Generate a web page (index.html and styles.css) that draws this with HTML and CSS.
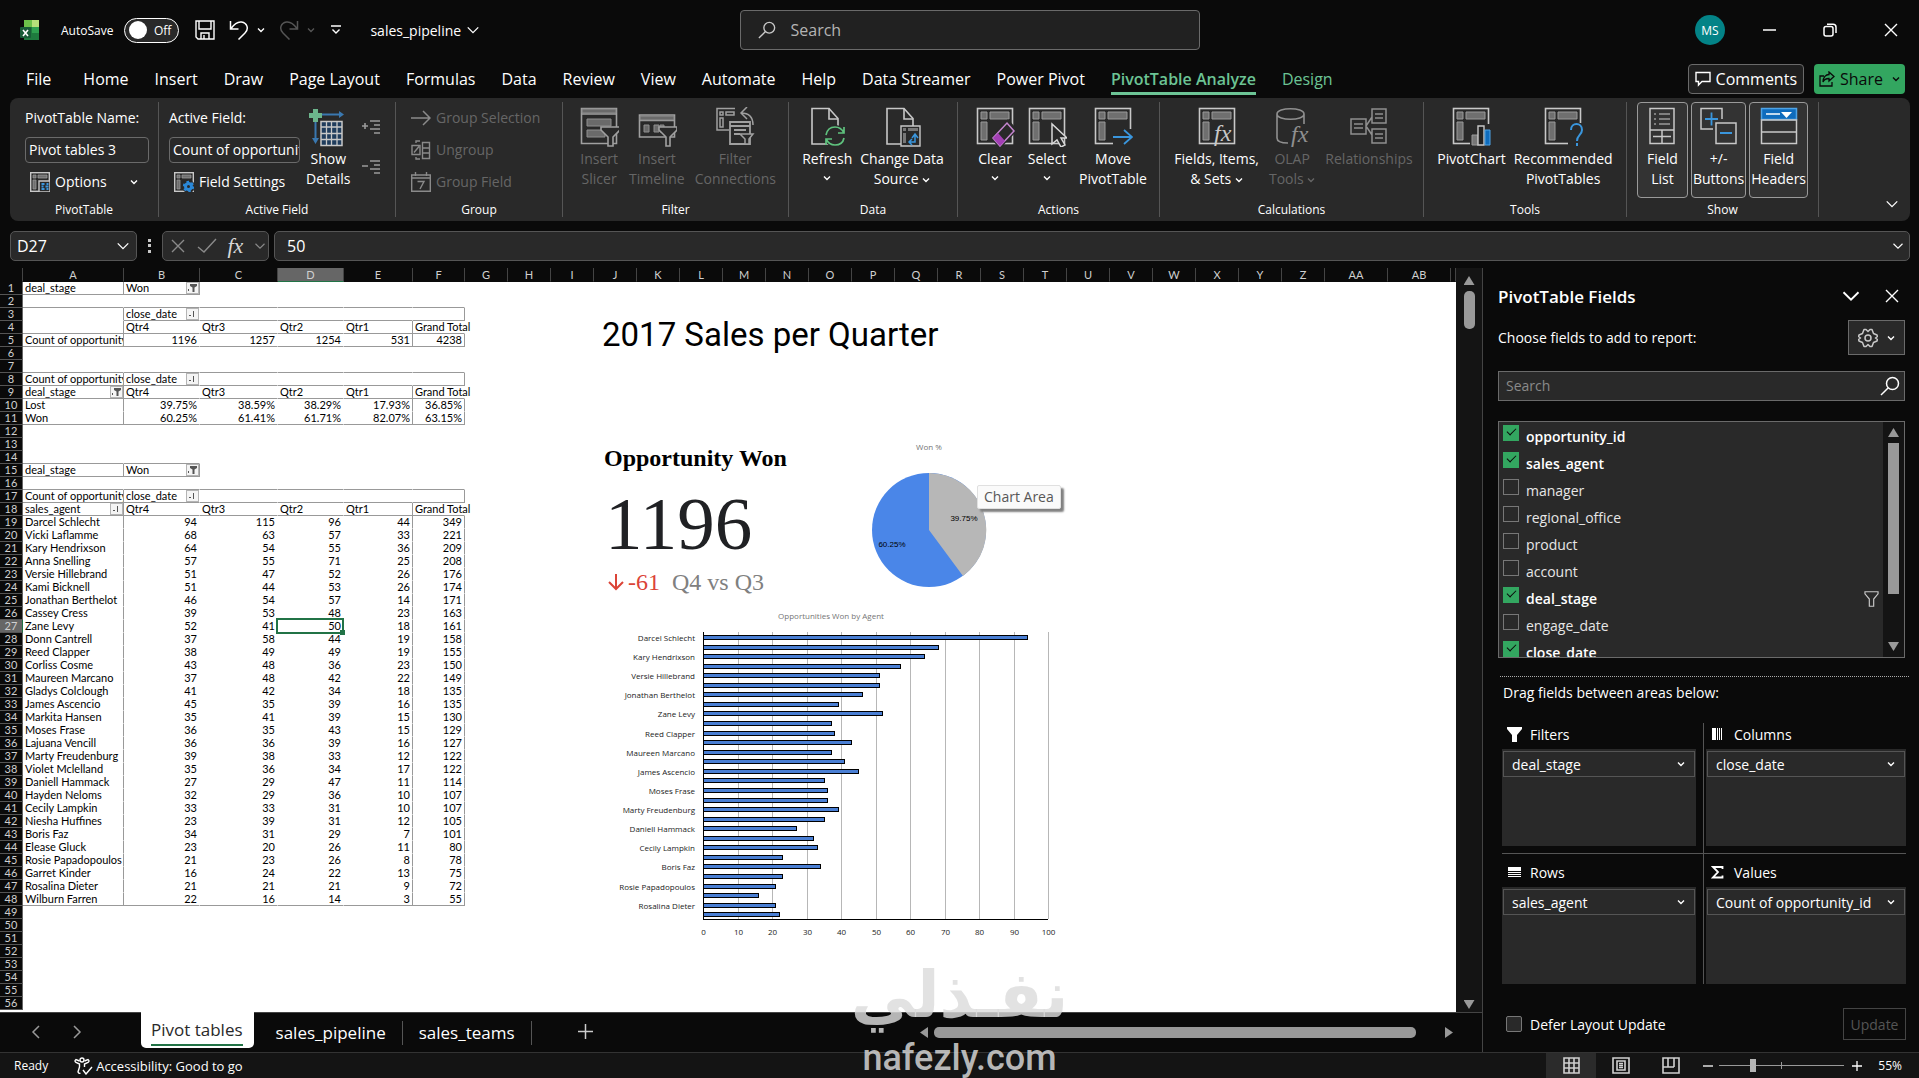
FILE: index.html
```
<!DOCTYPE html>
<html lang="en">
<head>
    <meta charset="UTF-8">
    <meta name="viewport" content="width=device-width, initial-scale=1.0">
    <title>sales_pipeline - Excel</title>
    <link rel="stylesheet" href="styles.css">
</head>
<body>
    <svg class="defs" aria-hidden="true">
        <symbol id="chev" viewBox="0 0 16 16"><path d="M2 5l6 6 6-6" fill="none" stroke="currentColor" stroke-width="1.5"/></symbol>
        <symbol id="chev-sm" viewBox="0 0 8 8"><path d="M1 2.5l3 3 3-3" fill="none" stroke="currentColor" stroke-width="1.4"/></symbol>
        <symbol id="close" viewBox="0 0 16 16"><path d="M2 2l12 12M14 2L2 14" fill="none" stroke="currentColor" stroke-width="1.4"/></symbol>
        <symbol id="glass" viewBox="0 0 20 20"><circle cx="12.5" cy="7.5" r="6" fill="none" stroke="currentColor" stroke-width="1.5"/><path d="M8.3 11.7L1 19" stroke="currentColor" stroke-width="1.5"/></symbol>
        <symbol id="pivot" viewBox="0 0 40 40">
            <rect x="2.5" y="1.5" width="35" height="35" fill="none" stroke="#c8c8c8" stroke-width="1.6"/>
            <path d="M6 5h6v7H6zM15 5h19v7H15zM6 15h6v18H6z" fill="#6f6f6f" stroke="#9a9a9a"/>
        </symbol>
        <symbol id="page" viewBox="0 0 40 40">
            <path d="M5 1.5h17l9 10V37H5z" fill="none" stroke="#c8c8c8" stroke-width="1.6"/>
            <path d="M22 1.5V12h9" fill="none" stroke="#c8c8c8" stroke-width="1.6"/>
        </symbol>
        <symbol id="funnel" viewBox="0 0 20 22"><path d="M1 1h18v3l-6 7v10H7V11L1 4z" fill="#292929" stroke="currentColor" stroke-width="1.6"/></symbol>
        <symbol id="pivot-sm" viewBox="0 0 20 20">
            <rect x=".7" y=".7" width="18.6" height="18.6" fill="none" stroke="#c8c8c8" stroke-width="1.4"/>
            <path d="M3 3h3v3H3zM8 3h9v3H8zM3 8h3v9H3z" fill="#6f6f6f" stroke="#9a9a9a" stroke-width=".8"/>
        </symbol>
    </svg>

    <header class="titlebar">
        <div class="quick">
            <svg class="logo" width="19" height="20" viewBox="0 0 19 20">
                <path d="M4 0h15v20H4z" fill="#1e7a3e"/><path d="M4 0h8v7H4z" fill="#6cc24a"/><path d="M12 0h7v7h-7z" fill="#b5e07a"/><path d="M12 7h7v6h-7z" fill="#2ea04f"/>
                <rect y="7" width="11" height="11" rx="1" fill="#185c37"/><path d="M3 10l5 6M8 10l-5 6" stroke="#fff" stroke-width="1.6"/>
            </svg>
            <label class="autosave">AutoSave <span class="toggle"><input type="checkbox">Off</span></label>
            <button class="icon-btn save" aria-label="Save"><svg width="20" height="20" viewBox="0 0 20 20" fill="none" stroke="currentColor" stroke-width="1.4"><path d="M1 1h18v18H3l-2-2zM4 1v8h12V1M6 19v-6h8v6M9 19v-4"/></svg></button>
            <button class="icon-btn" aria-label="Undo"><svg width="20" height="20" viewBox="0 0 20 20" fill="none" stroke="currentColor" stroke-width="1.5"><path d="M1.500 1v8h8M2 8.500C6 3 9 1.500 12.500 2c6 1 7.500 7 3.500 11L9.500 19.500"/></svg><svg width="8" height="8"><use href="#chev-sm"/></svg></button>
            <button class="icon-btn dim" aria-label="Redo"><svg width="20" height="20" viewBox="0 0 20 20" fill="none" stroke="currentColor" stroke-width="1.5"><path d="M18.500 1v8h-8M18 8.500C14 3 11 1.500 7.500 2c-6 1-7.500 7-3.500 11l6.500 6.500"/></svg><svg width="8" height="8"><use href="#chev-sm"/></svg></button>
            <button class="icon-btn custom" aria-label="Customize"><svg width="10" height="10" viewBox="0 0 10 10" fill="none" stroke="currentColor" stroke-width="1.400"><path d="M0 1h10M1.500 4.500L5 8l3.500-3.500"/></svg></button>
            <button class="icon-btn docname">sales_pipeline <svg width="14" height="14"><use href="#chev"/></svg></button>
        </div>
        <label class="search-top"><svg width="18" height="18"><use href="#glass"/></svg><input type="text" placeholder="Search" aria-label="Search"></label>
        <div class="window-btns">
            <button class="avatar">MS</button>
            <button aria-label="Minimize"><svg width="14" height="14" viewBox="0 0 14 14"><path d="M0 7h13" stroke="currentColor" stroke-width="1.500"/></svg></button>
            <button aria-label="Restore"><svg width="14" height="14" viewBox="0 0 14 14" fill="none" stroke="currentColor" stroke-width="1.500"><rect x="1" y="3.500" width="9" height="9.500" rx="2"/><path d="M4 1.200h6q3 0 3 3V10"/></svg></button>
            <button aria-label="Close"><svg width="16" height="16"><use href="#close"/></svg></button>
        </div>
    </header>

    <nav class="menu">
        <a href="#" class="file">File</a><a href="#">Home</a><a href="#">Insert</a><a href="#">Draw</a><a href="#">Page Layout</a><a href="#">Formulas</a><a href="#">Data</a><a href="#">Review</a><a href="#">View</a><a href="#">Automate</a><a href="#">Help</a><a href="#">Data Streamer</a><a href="#">Power Pivot</a><a href="#" class="active">PivotTable Analyze</a><a href="#" class="context">Design</a>
        <button class="comments"><svg width="16" height="16" viewBox="0 0 16 16" fill="none" stroke="currentColor" stroke-width="1.400"><path d="M1 1.500h14v9H7L3.500 14v-3.500H1z"/></svg>Comments</button>
        <button class="share"><svg width="16" height="16" viewBox="0 0 16 16" fill="none" stroke="currentColor" stroke-width="1.300"><path d="M5 5H1v10h12v-4M10 1l5 4.500-5 4.500V7.500c-3 0-5 1-6 3.500 0-5 3-7.500 6-7.500z"/></svg>Share<svg class="share-chev" width="8" height="8"><use href="#chev-sm"/></svg></button>
    </nav>

    <section class="ribbon">
        <div class="group g-pivot">
            <div class="stack">
                <label for="ptName">PivotTable Name:</label>
                <input id="ptName" type="text" value="Pivot tables 3">
                <button class="row-btn"><svg width="20" height="20"><use href="#pivot-sm"/><path d="M9 9h11v11H9z" fill="#292929" stroke="#c8c8c8" stroke-width="1.400"/><path d="M11.500 12h3M16.500 12h2M11.500 14.500h2M15.500 14.500h3M11.500 17h3M16.500 17h2" stroke="#3a96dd" stroke-width="2"/></svg>Options<svg class="push" width="8" height="8"><use href="#chev-sm"/></svg></button>
            </div>
            <h2>PivotTable</h2>
        </div>
        <div class="group g-field">
            <div class="items">
                <div class="stack">
                    <label for="activeField">Active Field:</label>
                    <input id="activeField" type="text" value="Count of opportunity_id">
                    <button class="row-btn"><svg width="20" height="20"><use href="#pivot-sm"/><circle cx="14.500" cy="14.500" r="6.500" fill="#292929"/><circle cx="14.500" cy="14.500" r="3" fill="none" stroke="#2b88d8" stroke-width="3"/><circle cx="14.500" cy="14.500" r="4.700" fill="none" stroke="#2b88d8" stroke-width="2" stroke-dasharray="2.500 2.400"/></svg>Field Settings</button>
                </div>
                <button class="big"><svg width="40" height="40" viewBox="0 0 40 40"><path d="M13 14.500h21v24H13z" fill="#1f3c5c" stroke="#c8c8c8" stroke-width="1.500"/><path d="M13 20h21M13 26.500h21M13 32.500h21M18.500 15v24M23.500 15v24M29 15v24" stroke="#c8c8c8" stroke-width="1.300"/><path d="M14 7.500h20M7.500 14v20" stroke="#3a78b0" stroke-width="2"/><path d="M31 4l5 3.500-5 3.500zM4 31l3.500 6 3.500-6z" fill="#3a78b0"/><path d="M5 2h5v4h4v5h-4v4H5v-4H1V6h4z" fill="#6cb58c"/></svg><span>Show<br>Details</span></button>
                <div class="expanders">
                    <button aria-label="Expand field"><svg width="18" height="14" viewBox="0 0 18 14" stroke="#9a9a9a" stroke-width="1.600"><path d="M0 6h6M3 3v6M8 1h10M12 5h6M8 9h10M12 13h6"/></svg></button>
                    <button aria-label="Collapse field"><svg width="18" height="14" viewBox="0 0 18 14" stroke="#9a9a9a" stroke-width="1.600"><path d="M0 6h6M8 1h10M12 5h6M8 9h10M12 13h6"/></svg></button>
                </div>
            </div>
            <h2>Active Field</h2>
        </div>
        <div class="group g-group">
            <div class="stack wide">
                <button class="row-btn dim" disabled><svg width="20" height="20" viewBox="0 0 20 20" fill="none" stroke="#8a8a8a" stroke-width="1.500"><path d="M0 10h18M12 3l7 7-7 7"/></svg>Group Selection</button>
                <button class="row-btn dim" disabled><svg width="20" height="20" viewBox="0 0 20 20" fill="none" stroke="#8a8a8a" stroke-width="1.400"><path d="M11.500 2.500h7v16h-7zM11.500 8h7M11.500 13h7M9 5.500H1v9h8zM3 12.500l5-6M5 3V1h4M5 17v2h4"/></svg>Ungroup</button>
                <button class="row-btn dim" disabled><svg width="20" height="20" viewBox="0 0 20 20" fill="none" stroke="#8a8a8a" stroke-width="1.400"><path d="M.700 3h18.600v16.300H.700zM1 6h18M4.500 0v4M15.500 0v4M6.500 9.500h6.500L9 17"/></svg>Group Field</button>
            </div>
            <h2>Group</h2>
        </div>
        <div class="group g-filter">
            <div class="items">
                <button class="big dim" disabled><svg width="40" height="40" viewBox="0 0 40 40"><path d="M2.500 1.500h35v35h-35zM2.500 7h35" fill="none" stroke="#a0a0a0" stroke-width="1.600"/><path d="M3 2h34v4H3zM8 12h24v7H8zM8 23h18v7H8z" fill="#6a6a6a" stroke="#8f8f8f"/><path d="M22 20h19v3l-7 7v9h-5v-9l-7-7z" fill="#292929" stroke="#a0a0a0" stroke-width="1.600"/></svg><span>Insert<br>Slicer</span></button>
                <button class="big dim" disabled><svg width="40" height="40" viewBox="0 0 40 40"><path d="M2.500 8h35v22h-35zM2.500 13.500h35" fill="none" stroke="#a0a0a0" stroke-width="1.600"/><path d="M3 9h34v4H3zM7 18h5v7H7zM17 18h5v7h-5zM23 18h4v7h-4z" fill="#6a6a6a" stroke="#8f8f8f"/><path d="M22 20h18v3l-7 7v9h-4v-9l-7-7z" fill="#292929" stroke="#a0a0a0" stroke-width="1.600"/></svg><span>Insert<br>Timeline</span></button>
                <button class="big dim" disabled><svg width="40" height="40" viewBox="0 0 40 40"><path d="M14 23H2V1.500h18M5 5h3v3H5zM11 5h8v3h-8zM5 11h3v9H5z" fill="none" stroke="#a0a0a0" stroke-width="1.500"/><path d="M32 0l-6 6 6 6M26 6c8 0 12 4 12 12" fill="none" stroke="#a0a0a0" stroke-width="1.500"/><path d="M15 15h20v22H15zM15 19h20M19 23h12M19 27h6" fill="#292929" stroke="#a0a0a0" stroke-width="1.800"/><path d="M25 27h13l-4 5v5h-4v-5z" fill="#292929" stroke="#a0a0a0" stroke-width="1.500"/></svg><span>Filter<br>Connections</span></button>
            </div>
            <h2>Filter</h2>
        </div>
        <div class="group g-data">
            <div class="items">
                <button class="big"><svg width="40" height="40"><use href="#page"/><circle cx="28" cy="29" r="11" fill="#292929"/><path d="M19 28c1-5 4-8 9-8 4 0 7 2 9 6M37 20v6h-6M37 31c-1 5-4 7-9 7-4 0-7-2-9-6M19 38v-6h6" fill="none" stroke="#5fc27e" stroke-width="1.700"/></svg><span>Refresh</span><svg width="8" height="8"><use href="#chev-sm"/></svg></button>
                <button class="big"><svg width="40" height="40"><use href="#page"/><path d="M19 19h19v20H19z" fill="#292929" stroke="#c8c8c8" stroke-width="1.400"/><path d="M21 21h3v3h-3zM26 21h10v3H26zM21 26h3v10h-3z" fill="#777"/><path d="M27 35h6v-7M30 31l3-4 3 4M30 32l-3 3 3 3" fill="none" stroke="#3a96dd" stroke-width="1.500"/></svg><span>Change Data<br>Source <svg width="8" height="8"><use href="#chev-sm"/></svg></span></button>
            </div>
            <h2>Data</h2>
        </div>
        <div class="group g-actions">
            <div class="items">
                <button class="big"><svg width="40" height="40"><use href="#pivot"/><path d="M18 31L33 15l7 8-15 16z" fill="#292929" stroke="#292929" stroke-width="4"/><path d="M18 31L32 16l7 8-14 15z" fill="none" stroke="#c586d0" stroke-width="1.500"/><path d="M18 31l5-5 7 8-5 5z" fill="#a33fb5"/></svg><span>Clear</span><svg width="8" height="8"><use href="#chev-sm"/></svg></button>
                <button class="big"><svg width="40" height="40"><use href="#pivot"/><path d="M25 17v20l5-4 4 7 4-2-4-7h6z" fill="#292929" stroke="#d8d8d8" stroke-width="1.500"/></svg><span>Select</span><svg width="8" height="8"><use href="#chev-sm"/></svg></button>
                <button class="big"><svg width="40" height="40"><use href="#pivot"/><path d="M20 22h20v16H20z" fill="#292929"/><path d="M20 30h18M31 23l8 7-8 7" fill="none" stroke="#3a96dd" stroke-width="1.800"/></svg><span>Move<br>PivotTable</span></button>
            </div>
            <h2>Actions</h2>
        </div>
        <div class="group g-calc">
            <div class="items">
                <button class="big"><svg width="40" height="40"><use href="#pivot"/><path d="M17 16h19v19H17z" fill="#292929"/><text x="17" y="34" class="fx-icon">fx</text></svg><span>Fields, Items,<br>&amp; Sets <svg width="8" height="8"><use href="#chev-sm"/></svg></span></button>
                <button class="big dim" disabled><svg width="40" height="40" viewBox="0 0 40 40"><path d="M16 36C8 36 5 34 5 31V7c0-7 27-7 27 0 0 7-27 7-27 0M32 7v10" fill="none" stroke="#8f8f8f" stroke-width="1.600"/><text x="19" y="35" class="fx-icon">fx</text></svg><span>OLAP<br>Tools <svg width="8" height="8"><use href="#chev-sm"/></svg></span></button>
                <button class="big dim" disabled><svg width="40" height="40" viewBox="0 0 40 40" fill="none" stroke="#8f8f8f" stroke-width="1.500"><path d="M2 12h15v15H2zM23 2h14v14H23zM23 22h14v14H23zM17 19l6-9M17 19l6 9M5 17h9M5 21h9M26 7h8M26 11h8M26 27h8M26 31h8"/></svg><span>Relationships</span></button>
            </div>
            <h2>Calculations</h2>
        </div>
        <div class="group g-tools">
            <div class="items">
                <button class="big"><svg width="40" height="40"><use href="#pivot"/><path d="M19 17h21v22H19z" fill="#292929"/><path d="M21 28h6v10h-6z" fill="#777" stroke="#9a9a9a"/><path d="M27 19h6v19h-6z" fill="#222" stroke="#c8c8c8" stroke-width="1.400"/><path d="M34 23h5v15h-5z" fill="#0f6cbd" stroke="#4ea3e6"/></svg><span>PivotChart</span></button>
                <button class="big"><svg width="40" height="40"><use href="#pivot"/><path d="M25 16h15v22H25z" fill="#292929"/><path d="M28 23c0-8 11-8 11 0 0 5-5 5-5 11M34 36v3" fill="none" stroke="#3a96dd" stroke-width="2"/></svg><span>Recommended<br>PivotTables</span></button>
            </div>
            <h2>Tools</h2>
        </div>
        <div class="group g-show">
            <div class="items">
                <button class="big on"><svg width="40" height="40" viewBox="0 0 40 40" fill="none" stroke="#c8c8c8" stroke-width="1.500"><path d="M8 1.500h24v35H8zM8 23h24M20 23v13M11 29.500h18"/><path d="M12 7h2M17 7h11M12 12h2M17 12h11M12 17h2M17 17h11" stroke="#9a9a9a"/></svg><span>Field<br>List</span></button>
                <button class="big on"><svg width="40" height="40" viewBox="0 0 40 40" fill="none" stroke="#c8c8c8" stroke-width="1.500"><path d="M14 22H2V1.500h21V12M17 16h20v20.500H17z"/><path d="M6 12h13M12.500 5.500v13M21 26h12" stroke="#3a96dd" stroke-width="1.800"/></svg><span>+/-<br>Buttons</span></button>
                <button class="big on"><svg width="40" height="40" viewBox="0 0 40 40" fill="none" stroke="#c8c8c8" stroke-width="1.500"><path d="M2.500 1.500h35v11h-35z" fill="#0f6cbd" stroke="#4ea3e6"/><path d="M2.500 13v23.500h35V13zM3 25h34"/><path d="M7 7h14" stroke="#fff"/><path d="M22 5h11l-5.500 6z" fill="#fff" stroke="none"/></svg><span>Field<br>Headers</span></button>
            </div>
            <h2>Show</h2>
        </div>
        <button class="collapse" aria-label="Collapse ribbon"><svg width="14" height="14"><use href="#chev"/></svg></button>
    </section>

    <div class="formula-row">
        <div class="box name-box"><input type="text" value="D27" aria-label="Name box"><svg width="14" height="14"><use href="#chev"/></svg></div>
        <span class="dots"></span>
        <div class="box fx-box">
            <button aria-label="Cancel"><svg width="16" height="16"><use href="#close"/></svg></button>
            <button aria-label="Enter"><svg width="20" height="16" viewBox="0 0 20 16"><path d="M1 9l6 5L19 1" fill="none" stroke="currentColor" stroke-width="1.400"/></svg></button>
            <button class="fx">fx</button>
            <svg width="12" height="12"><use href="#chev"/></svg>
        </div>
        <div class="box formula"><input type="text" value="50" aria-label="Formula"><svg width="12" height="12"><use href="#chev"/></svg></div>
    </div>

    <main class="workspace">
        <div class="book">
            <div class="sheet-row">
                <div class="sheet">
                    <table class="grid" id="grid"></table>
                    <h1 class="sheet-title">2017 Sales per Quarter</h1>
                    <div class="scorecard">
                        <h3>Opportunity Won</h3>
                        <p class="score">1196</p>
                        <p class="delta"><svg width="18" height="18" viewBox="0 0 18 18"><path d="M9 1v15M2 9l7 7 7-7" fill="none" stroke="currentColor" stroke-width="2"/></svg><b>-61</b> Q4 vs Q3</p>
                    </div>
                    <svg class="pie" width="150" height="160" viewBox="0 0 150 160">
                        <text x="75" y="10" class="chart-title">Won %</text>
                        <circle cx="75" cy="90" r="57" fill="#4a86e8"/>
                        <path d="M75 90V33A57 57 0 0 1 109 136z" fill="#b7b7b7"/>
                        <text x="110" y="81" class="pie-label">39.75%</text>
                        <text x="38" y="107" class="pie-label">60.25%</text>
                    </svg>
                    <div class="tip">Chart Area</div>
                    <svg class="bars" id="bars" width="450" height="340" viewBox="0 0 450 340"></svg>
                </div>
                <div class="vscroll"><i class="up"></i><i class="thumb"></i><i class="down"></i></div>
            </div>
            <div class="tabs">
                <button class="arrow" aria-label="Previous sheet"><svg width="10" height="14" viewBox="0 0 10 14"><path d="M8 1L2 7l6 6" fill="none" stroke="currentColor" stroke-width="1.500"/></svg></button>
                <button class="arrow" aria-label="Next sheet"><svg width="10" height="14" viewBox="0 0 10 14"><path d="M2 1l6 6-6 6" fill="none" stroke="currentColor" stroke-width="1.500"/></svg></button>
                <button class="tab current"><span>Pivot tables</span></button>
                <button class="tab">sales_pipeline</button>
                <button class="tab">sales_teams</button>
                <button class="add" aria-label="New sheet"><svg width="15" height="15" viewBox="0 0 15 15"><path d="M7.500 0v15M0 7.500h15" stroke="currentColor" stroke-width="1.500"/></svg></button>
                <div class="hscroll"><i class="left"></i><i class="thumb"></i><i class="right"></i></div>
            </div>
        </div>

        <aside class="pane">
            <div class="pane-head"><h2>PivotTable Fields</h2><button aria-label="Pane options"><svg width="20" height="20"><use href="#chev"/></svg></button><button aria-label="Close pane"><svg width="16" height="16"><use href="#close"/></svg></button></div>
            <div class="pane-sub"><span>Choose fields to add to report:</span>
                <button class="gear" aria-label="Tools"><svg width="20" height="20" viewBox="0 0 20 20" fill="none" stroke="#c8c8c8" stroke-width="1.500" stroke-linejoin="round"><path d="M6 1.500h2l2 2 2-2h2l1.500 4 3.500 1.500.5 1.500-2 1.500 2 1.500-.5 1.500-3.500 1.500-1.500 4h-2l-2-2-2 2H6l-1.500-4L1 13l-.5-1.500 2-1.500-2-1.500L1 7l3.500-1.500z"/><circle cx="10" cy="10" r="3"/></svg><svg width="8" height="8"><use href="#chev-sm"/></svg></button>
            </div>
            <label class="pane-search"><input type="text" placeholder="Search" aria-label="Search fields"><svg width="20" height="20"><use href="#glass"/></svg></label>
            <div class="field-box">
                <ul class="fields">
                    <li class="on"><label><input type="checkbox" checked>opportunity_id</label></li>
                    <li class="on"><label><input type="checkbox" checked>sales_agent</label></li>
                    <li><label><input type="checkbox">manager</label></li>
                    <li><label><input type="checkbox">regional_office</label></li>
                    <li><label><input type="checkbox">product</label></li>
                    <li><label><input type="checkbox">account</label></li>
                    <li class="on"><label><input type="checkbox" checked>deal_stage</label><svg width="15" height="16"><use href="#funnel"/></svg></li>
                    <li><label><input type="checkbox">engage_date</label></li>
                    <li class="on"><label><input type="checkbox" checked>close_date</label></li>
                </ul>
                <div class="list-scroll"><i class="up"></i><i class="thumb"></i><i class="down"></i></div>
            </div>
            <p class="drag">Drag fields between areas below:</p>
            <div class="areas">
                <section>
                    <h3><svg width="16" height="16" viewBox="0 0 16 16"><path d="M0 0h15v2L10 8v7H5V8L0 2z" fill="#fff"/></svg>Filters</h3>
                    <div class="drop"><button>deal_stage<svg width="8" height="8"><use href="#chev-sm"/></svg></button></div>
                </section>
                <section>
                    <h3><svg width="16" height="16" viewBox="0 0 16 16"><path d="M1 1h4v12H1zM6 1h1v12H6zM8 1h1v12H8zM10 1h1v12h-1z" fill="#fff"/></svg>Columns</h3>
                    <div class="drop"><button>close_date<svg width="8" height="8"><use href="#chev-sm"/></svg></button></div>
                </section>
                <section>
                    <h3><svg width="16" height="16" viewBox="0 0 16 16"><path d="M1 2h13v4H1zM1 7h13v1H1zM1 9h13v1H1zM1 11h13v1H1z" fill="#fff"/></svg>Rows</h3>
                    <div class="drop"><button>sales_agent<svg width="8" height="8"><use href="#chev-sm"/></svg></button></div>
                </section>
                <section>
                    <h3><svg width="16" height="16" viewBox="0 0 16 16"><path d="M11.500 4V2H2l5 5-5 5.500h9.500v-2" fill="none" stroke="#fff" stroke-width="1.800"/></svg>Values</h3>
                    <div class="drop"><button>Count of opportunity_id<svg width="8" height="8"><use href="#chev-sm"/></svg></button></div>
                </section>
            </div>
            <div class="pane-foot"><label><input type="checkbox">Defer Layout Update</label><button disabled>Update</button></div>
        </aside>
    </main>

    <footer class="status">
        <span>Ready</span>
        <button class="access"><svg width="19" height="18" viewBox="0 0 19 18" fill="none" stroke="currentColor" stroke-width="1.400"><circle cx="8" cy="3" r="2"/><path d="M5.500 4L2 2.500Q0 4 2 5.500L5.500 7v3L4 15q1 2 2.500 1M10.500 4L14 2.500q2 1.500 0 3L10.500 7v3M9 13l3 4 6-7"/></svg>Accessibility: Good to go</button>
        <div class="views">
            <button class="on" aria-label="Normal"><svg width="17" height="17" viewBox="0 0 17 17" fill="none" stroke="currentColor" stroke-width="1.600"><path d="M1 1h15v15H1zM1 6h15M1 11h15M6 1v15M11 1v15"/></svg></button>
            <button aria-label="Page layout"><svg width="18" height="17" viewBox="0 0 18 17" fill="none" stroke="currentColor" stroke-width="1.600"><path d="M1 1h16v15H1zM5 4h8v9H5zM7 6.500h4M7 8.500h4M7 10.500h4"/></svg></button>
            <button aria-label="Page break"><svg width="18" height="17" viewBox="0 0 18 17" fill="none" stroke="currentColor" stroke-width="1.600"><path d="M1 1h16v15H1zM6 1v9M12 1v9M1 10h11"/></svg></button>
        </div>
        <button class="zoom-btn" aria-label="Zoom out"><svg width="10" height="10" viewBox="0 0 10 10"><path d="M0 5h10" stroke="currentColor" stroke-width="1.300"/></svg></button>
        <input type="range" class="zoom" min="0" max="100" value="26" aria-label="Zoom">
        <button class="zoom-btn" aria-label="Zoom in"><svg width="10" height="10" viewBox="0 0 10 10"><path d="M0 5h10M5 0v10" stroke="currentColor" stroke-width="1.300"/></svg></button>
        <span class="percent">55%</span>
    </footer>

    <div class="brand"><span lang="ar" dir="rtl">نفـذلي</span><b>nafezly.com</b></div>
    <script src="script.js"></script>
</body>
</html>
```
FILE: styles.css
```
* { margin: 0; padding: 0; box-sizing: border-box; }
body {
    height: 100vh;
    display: flex;
    flex-direction: column;
    overflow: hidden;
    background: #0a0a0a;
    color: #fff;
    font-family: "Open Sans", "Noto Sans", sans-serif;
    font-size: 14px;
}
button, input { font: inherit; color: inherit; background: none; border: none; outline: none; }
button { cursor: pointer; white-space: nowrap; }
svg { flex: none; }
.defs { position: absolute; width: 0; height: 0; }
h1, h2, h3 { font-weight: 400; }

/* title bar */
.titlebar {
    height: 60px;
    flex: none;
    display: grid;
    grid-template-columns: 1fr 460px 1fr;
    align-items: center;
    padding-left: 20px;
}
.quick { display: flex; align-items: center; }
.autosave { display: flex; align-items: center; gap: 11px; margin-left: 22px; font-size: 12px; }
.toggle {
    display: flex; align-items: center; justify-content: space-between;
    width: 55px; height: 25px; padding: 0 7px 0 4px;
    border: 1px solid #fff; border-radius: 13px; background: #292929;
}
.toggle input { appearance: none; width: 18px; height: 18px; border-radius: 50%; background: #fff; }
.icon-btn { display: flex; align-items: center; gap: 8px; margin-left: 14px; }
.icon-btn.save { margin-left: 16px; }
.titlebar .dim { color: #555; }
.icon-btn.custom { margin-left: 16px; }
.icon-btn.docname { margin-left: 29px; gap: 5px; }
.search-top {
    display: flex; align-items: center; gap: 15px;
    height: 40px; padding: 0 17px;
    border: 1px solid #6a6a6a; border-radius: 4px; background: #212121; color: #c8c8c8;
}
.search-top input { flex: 1; font-size: 16px; }
input::placeholder { color: #b4b4b4; opacity: 1; }
.window-btns { display: flex; justify-content: flex-end; align-items: center; padding-right: 20px; gap: 46px; }
.window-btns button { display: flex; }
.window-btns .avatar {
    width: 30px; height: 30px; margin-right: -8px; border-radius: 50%;
    background: #038387; font-size: 12px; align-items: center; justify-content: center;
}

/* menu tabs */
.menu { height: 38px; flex: none; display: flex; align-items: center; padding: 0 14px 0 26px; gap: 26px; font-size: 16px; }
.menu a { color: #fff; text-decoration: none; line-height: 26px; padding-top: 3px; border-bottom: 3px solid transparent; white-space: nowrap; }
.menu .file { margin-right: 6px; }
.menu .active { color: #6cc495; font-weight: 600; border-color: #6cc495; }
.menu .context { color: #6cc495; }
.menu button { display: flex; align-items: center; height: 30px; border-radius: 4px; gap: 5px; }
.comments { margin-left: auto; padding: 0 6px; border: 1px solid #6a6a6a; background: #1f1f1f; }
.share { margin-left: -16px; padding: 0 5px; background: #33a660; color: #0a0a0a; }
.share-chev { margin-left: 4px; }

/* ribbon */
.ribbon { height: 123px; flex: none; display: flex; margin: 0 9px 0 10px; padding: 4px 0 4px; border-radius: 8px; background: #292929; }
.group { display: flex; flex-direction: column; justify-content: space-between; border-right: 1px solid #555; }
.group h2 { font-size: 12px; line-height: 14px; text-align: center; }
.g-pivot { width: 149px; }
.g-field { width: 237px; }
.g-group { width: 167px; }
.g-filter { width: 226px; }
.g-data { width: 169px; }
.g-actions { width: 202px; }
.g-calc { width: 264px; }
.g-tools { width: 203px; }
.g-show { width: 192px; }
.items { display: flex; justify-content: center; gap: 10px; height: 96px; }
.g-field .items { justify-content: flex-start; }
.g-show .items { gap: 3px; }
.g-filter .items, .g-calc .items { gap: 8px; padding-left: 4px; }
.g-actions .items { padding-left: 5px; }
.g-data .items, .g-tools .items { gap: 6px; }
.stack { display: flex; flex-direction: column; gap: 6px; width: 149px; padding: 3px 10px 0 15px; line-height: 26px; }
.g-field .stack { padding: 3px 0 0 10px; width: 141px; flex: none; }
.stack.wide { width: 100%; }
.stack label { white-space: nowrap; }
.stack input { width: 100%; height: 26px; padding: 0 0 0 3px; border: 1px solid #6a6a6a; border-radius: 4px; }
.row-btn { display: flex; align-items: center; gap: 5px; height: 26px; padding: 0 11px 0 5px; line-height: 26px; }
.wide .row-btn { padding: 0; }
.push { margin-left: auto; }
.big { display: flex; flex-direction: column; align-items: center; padding-top: 4px; line-height: 20px; border: 1px solid transparent; border-radius: 4px; flex: none; }
.big > span { margin-top: 2px; }
.big > svg + span + svg { margin-top: 5px; }
.big.on { padding: 4px 1px 0; min-width: 51px; background: #333; border-color: #9a9a9a; }
.ribbon .dim { color: #666; }
.g-field .big { margin-left: -5px; }
.expanders { display: flex; flex-direction: column; gap: 26px; padding-top: 18px; }
.expanders button { display: flex; }
.fx-icon { font: italic 24px "Liberation Serif", serif; fill: #c8c8c8; }
.dim .fx-icon { fill: #8f8f8f; }
.collapse { margin: auto 11px 2px auto; }

/* formula bar */
.formula-row { flex: none; display: flex; height: 30px; margin: 10px 9px 7px 10px; font-size: 16px; }
.box { display: flex; align-items: center; border: 1px solid #555; border-radius: 5px; background: #292929; }
.name-box { width: 127px; padding: 0 6px; }
.name-box input { width: 100%; }
.dots { width: 3px; margin: 8px 11px; border-left: 3px dotted #c8c8c8; }
.fx-box { width: 107px; padding: 0 2px 0 7px; justify-content: space-between; color: #8a8a8a; }
.fx-box button { display: flex; }
.fx-box .fx { font: italic 22px "Liberation Serif", serif; color: #d8d8d8; }
.formula { flex: 1; margin-left: 5px; padding: 0 5px 0 12px; }
.formula input { flex: 1; }

/* sheet */
.workspace { flex: 1; display: flex; min-height: 0; }
.book { flex: 1; display: flex; flex-direction: column; min-width: 0; }
.sheet-row { flex: 1; display: flex; min-height: 0; }
.sheet { position: relative; flex: 1; overflow: hidden; background: #fff; color: #000; }
.grid { width: 100%; table-layout: fixed; border-collapse: separate; border-spacing: 0; font: 11px/12px Lato, sans-serif; }
.grid th { height: 13px; background: #0a0a0a; color: #d0d0d0; font-weight: 400; border-right: 1px solid #666; border-bottom: 1px solid #0a0a0a; overflow: hidden; }
.grid thead th { height: 14px; border-color: #0a0a0a #444 #0a0a0a #0a0a0a; }
.grid tbody th { border-bottom-color: #555; }
.grid th.sel { background: #666; }
.grid thead th.sel { border-bottom-color: #217346; }
.grid tbody th.sel { border-right-color: #217346; }
.grid td { position: relative; height: 13px; padding: 0 2px; white-space: nowrap; border-right: 1px solid transparent; border-bottom: 1px solid transparent; }
.grid td:nth-child(2) { overflow: hidden; text-overflow: clip; padding-right: 0; }
.grid td.num { text-align: right; }
.grid td.r { border-right-color: #999; }
.grid td.b { border-bottom-color: #999; }
.grid td.cursor::before { content: ''; position: absolute; inset: -2px -1px -2px -2px; border: 2px solid #217346; }
.grid td.cursor::after { content: ''; position: absolute; right: -2px; bottom: -3px; width: 5px; height: 5px; background: #217346; }
.filter-btn { position: absolute; right: 0; top: 0; width: 13px; height: 12px; display: flex; align-items: center; justify-content: center; border: 1px solid #b4b4b4; background: #f4f4f4; color: #555; }

.sheet-title { position: absolute; left: 602px; top: 43px; font: 33px/48px Roboto, sans-serif; white-space: nowrap; }
.scorecard { position: absolute; left: 604px; top: 172px; font-family: "Liberation Serif", serif; }
.scorecard h3 { font-size: 24px; line-height: 36px; font-weight: 700; }
.score { padding-left: 1px; font-size: 75px; line-height: 96px; color: #202124; }
.delta { display: flex; align-items: center; font-size: 24px; line-height: 28px; margin-top: -4px; padding-left: 3px; color: #808080; white-space: pre; }
.delta svg, .delta b { color: #db4437; font-weight: 400; }
.delta svg { margin-right: 3px; }
.delta b { margin-right: 6px; }
.pie { position: absolute; left: 854px; top: 172px; }
.chart-title { font: 8px "Open Sans", sans-serif; fill: #757575; text-anchor: middle; }
.pie-label { font: 8px "Liberation Sans", sans-serif; text-anchor: middle; }
.tip { position: absolute; left: 977px; top: 217px; padding: 0 6px; line-height: 22px; font-size: 14px; color: #575757; background: #fafafa; border: 1px solid #e0e0e0; border-radius: 2px; box-shadow: 3px 3px 2px #808080; }
.bars { position: absolute; left: 610px; top: 334px; shape-rendering: crispEdges; }
.bars text { font: 8px "Open Sans", sans-serif; fill: #222; }
.bars .chart-title { fill: #757575; }
.bars .name { text-anchor: end; }
.bars .tick { text-anchor: middle; }
.bars line { stroke: #b7b7b7; }
.bars .axis { stroke: #000; }
.bars rect { fill: #4a7fd4; stroke: #000; }

/* scroll bars */
.vscroll { width: 26px; display: flex; flex-direction: column; align-items: center; padding: 8px 0 3px; background: #141414; }
.vscroll .thumb { width: 11px; height: 38px; margin-top: 6px; border-radius: 5px; }
.thumb { background: #999; }
.up, .down { width: 11px; height: 9px; background: #999; clip-path: polygon(50% 0, 100% 100%, 0 100%); }
.down { margin-top: auto; clip-path: polygon(0 0, 100% 0, 50% 100%); }
.left, .right { width: 8px; height: 11px; background: #999; clip-path: polygon(0 50%, 100% 0, 100% 100%); }
.right { clip-path: polygon(0 0, 100% 50%, 0 100%); }

/* sheet tabs */
.tabs { flex: none; display: flex; align-items: center; height: 40px; border-top: 1px solid #444; padding: 0 29px 0 30px; font-size: 17px; color: #fff; }
.arrow { width: 12px; margin-right: 29px; color: #999; }
.arrow + .arrow { margin-right: 58px; }
.tab { height: 24px; padding: 0 16px; line-height: 22px; border-right: 1px solid #555; }
.tab.current { align-self: flex-start; height: 36px; margin-top: -1px; margin-right: 6px; padding: 0 11px 0 10px; border: none; border-radius: 0 0 5px 5px; background: #fff; color: #292929; line-height: 30px; }
.tab.current span { display: block; height: 31px; border-bottom: 2px solid #217346; }
.add { margin-left: 46px; color: #ccc; }
.hscroll { display: flex; align-items: center; width: 533px; margin-left: auto; }
.hscroll .thumb { width: 482px; height: 11px; margin: 0 auto 0 6px; border-radius: 5px; }

/* field pane */
.pane { width: 437px; flex: none; display: flex; flex-direction: column; border-left: 1px solid #444; padding: 12px 14px 0 15px; }
.pane-head { display: flex; align-items: center; height: 32px; }
.pane-head h2 { flex: 1; font-size: 17px; font-weight: 600; }
.pane-head button { display: flex; margin-right: 5px; }
.pane-head button:first-of-type { margin-right: 23px; }
.pane-sub { display: flex; align-items: center; justify-content: space-between; height: 35px; margin-top: 8px; }
.gear { display: flex; align-items: center; justify-content: center; gap: 9px; width: 57px; height: 35px; border: 1px solid #6a6a6a; background: #292929; }
.pane-search { display: flex; align-items: center; height: 30px; margin-top: 16px; padding: 0 4px 0 7px; border: 1px solid #6a6a6a; background: #292929; }
.pane-search input { flex: 1; height: 24px; padding-bottom: 2px; }
.pane-search input::placeholder { color: #8a8a8a; }
.field-box { display: flex; height: 237px; margin-top: 20px; border: 1px solid #6a6a6a; background: #292929; overflow: hidden; }
.fields { flex: 1; list-style: none; padding: 3px 4px 0; }
.fields li { display: flex; justify-content: space-between; height: 27px; color: #e6e6e6; }
.fields label { display: flex; gap: 7px; line-height: 23px; }
.fields .on { font-weight: 600; color: #fff; }
.fields svg { margin-top: 4px; color: #c8c8c8; }
.pane input[type=checkbox] { appearance: none; position: relative; width: 16px; height: 16px; border: 1px solid #777; flex: none; }
.pane input:checked { background: #33a660; border-color: #33a660; }
.pane input:checked::after { content: ''; position: absolute; left: 3px; top: 2px; width: 8px; height: 4px; border: solid #0a0a0a; border-width: 0 0 1px 1px; transform: rotate(-45deg); }
.list-scroll { width: 21px; display: flex; flex-direction: column; align-items: center; padding: 6px 0; background: #141414; }
.list-scroll .thumb { width: 11px; height: 151px; margin-top: 6px; }
.drag { margin: 18px -4px 0 2px; padding: 6px 3px 0; border-top: 1px dotted #aaa; line-height: 20px; }
.areas { display: grid; grid-template-columns: 194px 1fr; column-gap: 10px; margin: 20px -1px 0 4px; background: linear-gradient(#555, #555) 201px 0 / 1px 100% no-repeat, linear-gradient(#555, #555) 0 130px / 100% 1px no-repeat; }
.areas section { padding-bottom: 15px; }
.areas section:nth-child(n+3) { padding-bottom: 0; }
.areas h3 { display: flex; align-items: center; gap: 7px; height: 26px; padding: 0 0 3px 5px; font-size: 14px; }
.drop { height: 97px; padding: 2px 1px; background: #292929; }
.drop button { display: flex; align-items: center; justify-content: space-between; width: 100%; height: 26px; padding: 0 9px 0 8px; border: 1px solid #555; }
.pane-foot { display: flex; align-items: center; justify-content: space-between; margin: 24px -1px 0 8px; }
.pane-foot label { display: flex; align-items: center; gap: 8px; }
.pane-foot input[type=checkbox] { border-radius: 2px; background: #292929; }
.pane-foot button { width: 63px; height: 32px; border: 1px solid #444; color: #555; }

/* status bar */
.status { flex: none; display: flex; align-items: center; height: 26px; padding: 0 17px 0 14px; border-top: 1px solid #333; background: #141414; font-size: 12px; }
.access { display: flex; align-items: center; gap: 3px; margin-left: 26px; font-size: 13px; }
.views { display: flex; align-self: stretch; margin-left: auto; margin-right: 7px; }
.views button { display: flex; align-items: center; justify-content: center; width: 50px; color: #d0d0d0; }
.views .on { background: #2b2b2b; }
.zoom-btn { display: flex; }
.zoom { appearance: none; width: 125px; height: 13px; margin: 0 8px 0 6px; background: linear-gradient(#999, #999) 0 6px / 100% 1px no-repeat, linear-gradient(#999, #999) 62px 3px / 1px 7px no-repeat; }
.zoom::-webkit-slider-thumb { appearance: none; width: 6px; height: 13px; background: #b4b4b4; }
.percent { margin-left: 16px; }

/* watermark lies over the sheet and the status bar */
.brand { position: absolute; left: 853px; top: 954px; width: 213px; display: flex; flex-direction: column; align-items: center; color: rgba(220, 220, 220, 0.82); pointer-events: none; }
.brand span { font: 700 64px/82px "DejaVu Sans", sans-serif; white-space: nowrap; }
.brand b { font: 500 36px/44px Roboto, sans-serif; }
```
FILE: script.js
```
const agents = [
    ['Darcel Schlecht', 94, 115, 96, 44, 349],
    ['Vicki Laflamme', 68, 63, 57, 33, 221],
    ['Kary Hendrixson', 64, 54, 55, 36, 209],
    ['Anna Snelling', 57, 55, 71, 25, 208],
    ['Versie Hillebrand', 51, 47, 52, 26, 176],
    ['Kami Bicknell', 51, 44, 53, 26, 174],
    ['Jonathan Berthelot', 46, 54, 57, 14, 171],
    ['Cassey Cress', 39, 53, 48, 23, 163],
    ['Zane Levy', 52, 41, 50, 18, 161],
    ['Donn Cantrell', 37, 58, 44, 19, 158],
    ['Reed Clapper', 38, 49, 49, 19, 155],
    ['Corliss Cosme', 43, 48, 36, 23, 150],
    ['Maureen Marcano', 37, 48, 42, 22, 149],
    ['Gladys Colclough', 41, 42, 34, 18, 135],
    ['James Ascencio', 45, 35, 39, 16, 135],
    ['Markita Hansen', 35, 41, 39, 15, 130],
    ['Moses Frase', 36, 35, 43, 15, 129],
    ['Lajuana Vencill', 36, 36, 39, 16, 127],
    ['Marty Freudenburg', 39, 38, 33, 12, 122],
    ['Violet Mclelland', 35, 36, 34, 17, 122],
    ['Daniell Hammack', 27, 29, 47, 11, 114],
    ['Hayden Neloms', 32, 29, 36, 10, 107],
    ['Cecily Lampkin', 33, 33, 31, 10, 107],
    ['Niesha Huffines', 23, 39, 31, 12, 105],
    ['Boris Faz', 34, 31, 29, 7, 101],
    ['Elease Gluck', 23, 20, 26, 11, 80],
    ['Rosie Papadopoulos', 21, 23, 26, 8, 78],
    ['Garret Kinder', 16, 24, 22, 13, 75],
    ['Rosalina Dieter', 21, 21, 21, 9, 72],
    ['Wilburn Farren', 22, 16, 14, 3, 55]
];

const quarters = ['Qtr4', 'Qtr3', 'Qtr2', 'Qtr1', 'Grand Total'];
const rows = {
    1: ['deal_stage', 'Won'],
    3: ['', 'close_date'],
    4: ['', ...quarters],
    5: ['Count of opportunity_', 1196, 1257, 1254, 531, 4238],
    8: ['Count of opportunity_', 'close_date'],
    9: ['deal_stage', ...quarters],
    10: ['Lost', '39.75%', '38.59%', '38.29%', '17.93%', '36.85%'],
    11: ['Won', '60.25%', '61.41%', '61.71%', '82.07%', '63.15%'],
    15: ['deal_stage', 'Won'],
    17: ['Count of opportunity_', 'close_date'],
    18: ['sales_agent', ...quarters]
};
agents.forEach((a, i) => rows[19 + i] = a);

// cell borders and filter buttons, by row
const bottom = { 1: 'AB', 2: 'ABCDEF', 3: 'BCDEF', 4: 'ABCDEF', 5: 'ABCDEF', 7: 'ABCDEF', 8: 'ABCDEF', 9: 'ABCDEF', 11: 'ABCDEF', 14: 'AB', 15: 'AB', 16: 'ABCDEF', 17: 'ABCDEF', 18: 'ABCDEF', 48: 'ABCDEF' };
const right = { 1: 'AB', 3: 'AF', 4: 'AE', 5: 'AEF', 8: 'AF', 9: 'AE', 10: 'AEF', 11: 'AEF', 15: 'AB', 17: 'AF', 18: 'AE' };
for (let r = 19; r <= 48; r++) right[r] = 'AEF';
const filters = { B1: 'funnel', B3: 'sort', B8: 'sort', A9: 'funnel', B15: 'funnel', B17: 'sort', A18: 'sort' };
const icons = {
    funnel: '<svg width="9" height="8" viewBox="0 0 9 8"><path d="M2 0h7v2L6.500 3.500V8h-2V3.500L2 2zM0 5h1v2H0z" fill="currentColor"/></svg>',
    sort: '<svg width="7" height="7" viewBox="0 0 7 7"><path d="M0 4h2v1H0zM4 0h1v6H4z" fill="currentColor"/></svg>'
};

function buildGrid() {
    const names = [...'ABCDEFGHIJKLMNOPQRSTUVWXYZ', 'AA', 'AB'];
    const widths = [101, 76, 78, 66, 69, 52];
    let html = '<colgroup><col style="width:23px">';
    names.forEach((n, i) => html += `<col style="width:${widths[i] || (n.length > 1 ? 63 : 43)}px">`);
    html += '<col></colgroup><thead><tr><th></th>';
    names.forEach(n => html += `<th${n === 'D' ? ' class="sel"' : ''}>${n}</th>`);
    html += '<th></th></tr></thead><tbody>';
    for (let r = 1; r <= 56; r++) {
        html += `<tr><th${r === 27 ? ' class="sel"' : ''}>${r}</th>`;
        for (let c = 0; c < 6; c++) {
            const col = names[c];
            const value = rows[r] && rows[r][c] !== undefined ? rows[r][c] : '';
            const cls = [];
            if (/^\d/.test(value)) cls.push('num');
            if ((bottom[r] || '').includes(col)) cls.push('b');
            if ((right[r] || '').includes(col)) cls.push('r');
            if (col + r === 'D27') cls.push('cursor');
            const f = filters[col + r];
            html += `<td class="${cls.join(' ')}">${value}${f ? `<button class="filter-btn" aria-label="Filter">${icons[f]}</button>` : ''}</td>`;
        }
        html += '</tr>';
    }
    document.getElementById('grid').innerHTML = html + '</tbody>';
}

function buildBars() {
    const left = 93, unit = 3.45, top = 30, base = 317;
    let svg = '<text class="chart-title" x="221" y="17">Opportunities Won by Agent</text>';
    for (let v = 0; v <= 100; v += 10) {
        const x = Math.round(left + v * unit) + 0.5;
        svg += `<line x1="${x}" x2="${x}" y1="${top}" y2="${base}"/><text class="tick" x="${x}" y="333">${v}</text>`;
    }
    agents.forEach(([name, won], i) => {
        const y = Math.round(33 + i * 9.56) + 0.5;
        svg += `<rect x="${left + 0.5}" y="${y}" width="${Math.round(won * unit)}" height="4"/>`;
        if (i % 2 === 0) svg += `<text class="name" x="85" y="${y + 5}">${name}</text>`;
    });
    svg += `<path class="axis" d="M${left + 0.5} ${top}V${base + 0.5}H438" fill="none"/>`;
    document.getElementById('bars').innerHTML = svg;
}

buildGrid();
buildBars();
```
